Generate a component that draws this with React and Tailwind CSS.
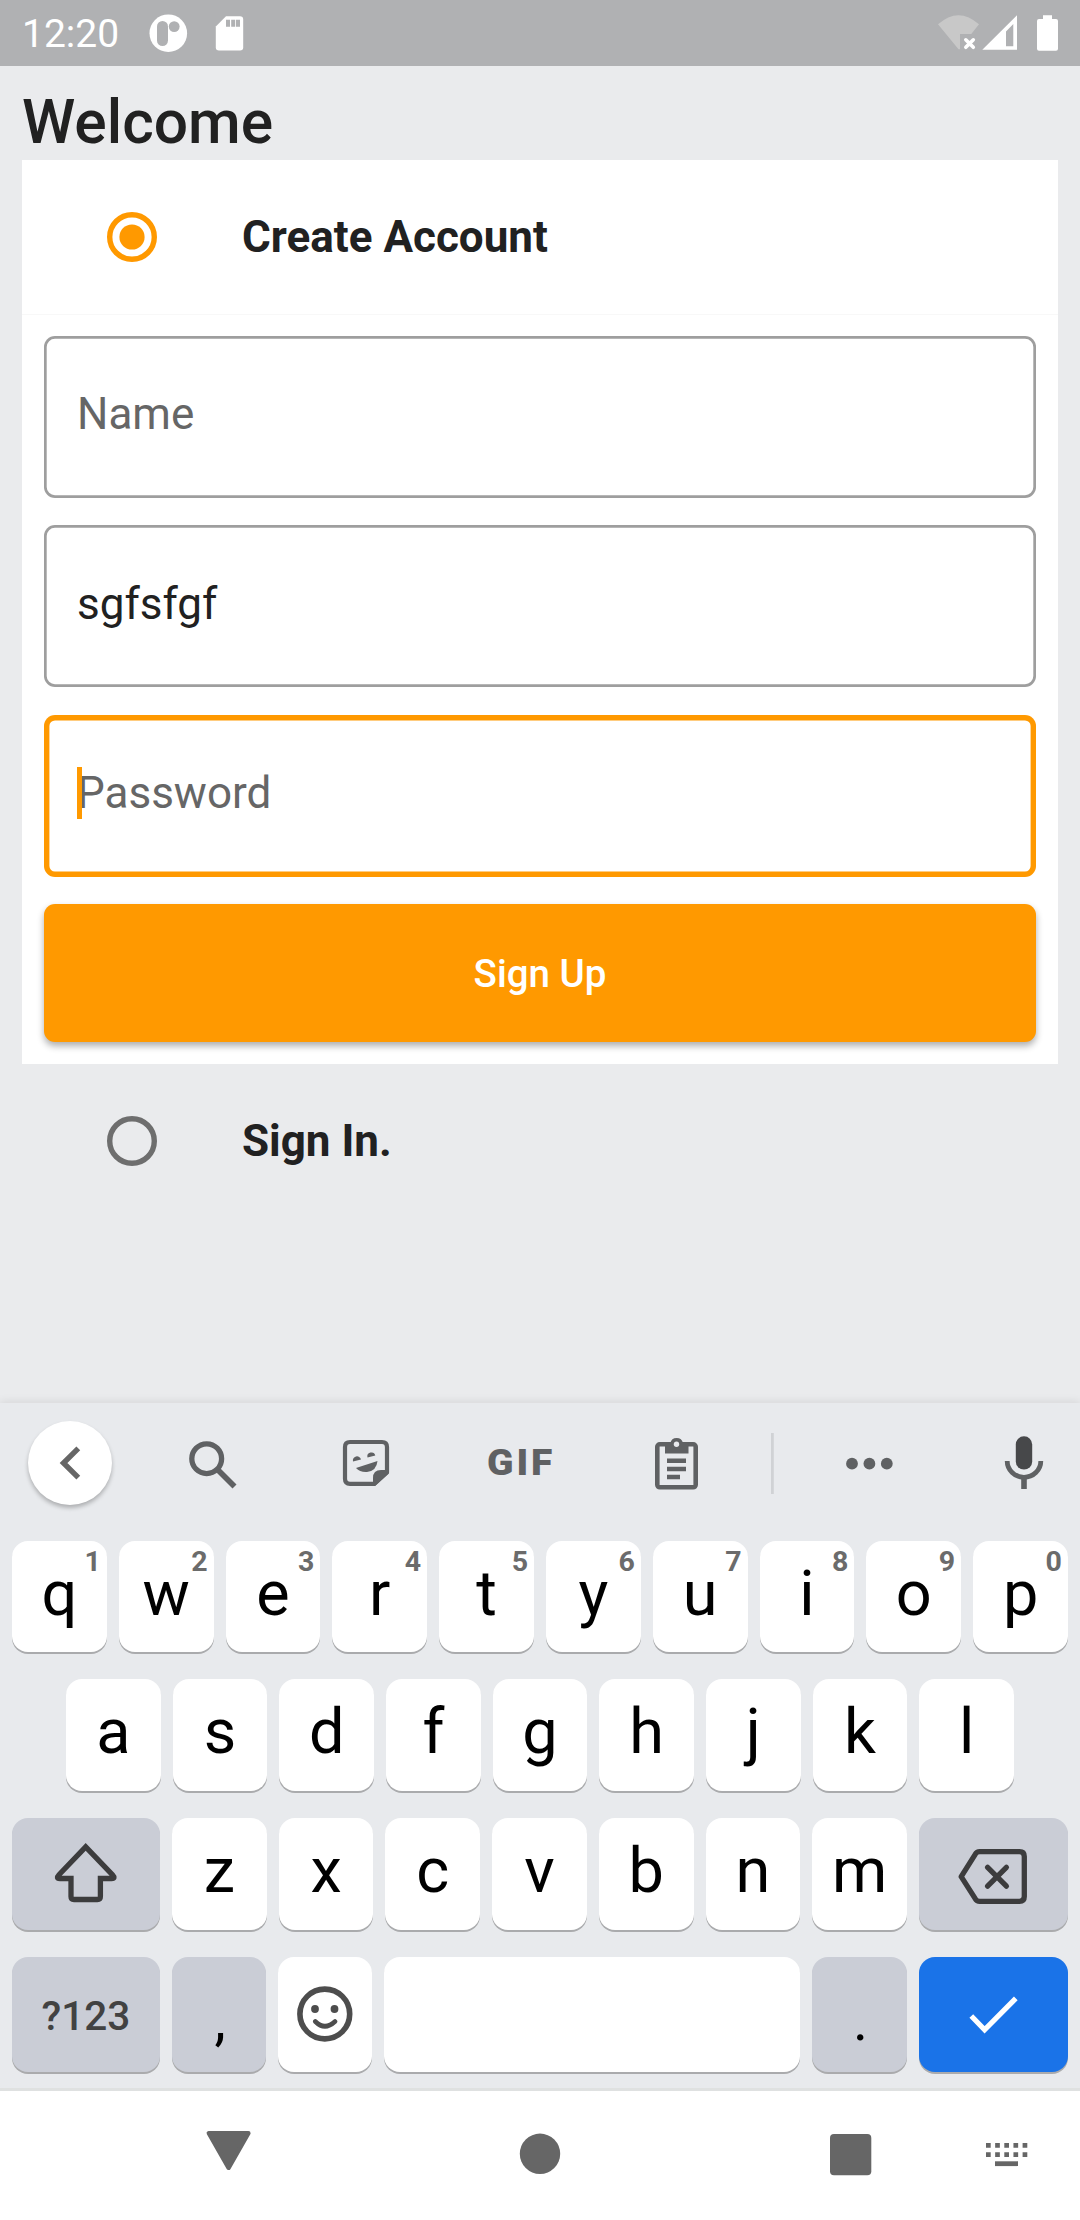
import React from "react";

const INK = "#5f6163";

function Icon({ x, y, w, h, className = "", children }) {
  return (
    <svg width={w} height={h} viewBox={`${x} ${y} ${w} ${h}`} className={`block shrink-0 ${className}`} fill="none">
      {children}
    </svg>
  );
}

function StatusBar() {
  return (
    <header className="flex h-[66px] shrink-0 items-start bg-[#b0b1b3] text-white">
      <span className="ml-[22px] w-[124px] text-[39px] leading-[69px]">12:20</span>
      <Icon x={146} y={0} w={60} h={66}>
        <circle cx="168.3" cy="33.2" r="18.8" fill="#fff" />
        <rect x="157" y="21" width="11" height="25" rx="5.5" fill="#b0b1b3" />
        <circle cx="174.2" cy="26.6" r="5.4" fill="#b0b1b3" />
      </Icon>
      <Icon x={206} y={0} w={50} h={66}>
        <path d="M226 16.3H240Q243.2 16.3 243.2 19.5V47.3Q243.2 50.6 240 50.6H219Q215.8 50.6 215.8 47.3V26.5Z" fill="#fff" />
        <path d="M226 19.7h4v7h-4zM231.2 19.7h4v7h-4zM236 19.7h4v7h-4z" fill="#b0b1b3" />
      </Icon>
      <Icon x={930} y={0} w={51} h={66} className="ml-auto">
        <path d="M938 24.3Q958.5 6 979 24.3L971.3 34H960V49.3H958.5Z" fill="#c8c8c8" />
        <path d="M965.8 39.8L973.3 47.3M973.3 39.8L965.8 47.3" stroke="#fff" strokeWidth="3.6" strokeLinecap="round" />
      </Icon>
      <Icon x={981} y={0} w={44} h={66}>
        <path fillRule="evenodd" d="M1017 15.3V49.8H982.3ZM1013.3 24L1006 31.5V46.3H1013.3Z" fill="#fff" />
      </Icon>
      <Icon x={1025} y={0} w={55} h={66}>
        <path d="M1043 15.2H1052V19H1056Q1058 19 1058 21V48.7Q1058 50.7 1056 50.7H1039Q1037 50.7 1037 48.7V21Q1037 19 1039 19H1043Z" fill="#fff" />
      </Icon>
    </header>
  );
}

function RadioRow({ label, checked }) {
  return (
    <div className="flex h-[154px] items-center pl-[84px]">
      <svg width="52" height="52" viewBox="-26 -26 52 52" fill="none" className="block">
        <circle r="22.3" stroke={checked ? "#ff9900" : "#6e6e6e"} strokeWidth="5.4" />
        {checked && <circle r="12.6" fill="#ff9900" />}
      </svg>
      <span className="ml-[84px] text-[44px] leading-[52px] font-bold text-[#212121]">{label}</span>
    </div>
  );
}

function Field({ text, filled, focused, className = "" }) {
  return (
    <div
      className={`flex h-[162px] items-center rounded-[11px] pl-[33px] ${
        focused ? "shadow-[inset_0_0_0_5.4px_#ff9900]" : "shadow-[inset_0_0_0_2.7px_#9e9e9e]"
      } ${filled ? "pb-[5px]" : "pb-[7px]"} ${className}`}
    >
      <div className="relative">
        <span className={`block text-[44px] leading-[52px] ${filled ? "text-[#212121]" : "text-[#666666]"}`}>{text}</span>
        {focused && <span className="absolute top-0 left-0 h-[52px] w-[5.4px] bg-[#ff9900]" />}
      </div>
    </div>
  );
}

function Form() {
  return (
    <main className="h-[1337px] shrink-0 px-[22px]">
      <h1 className="h-[94px] pt-[18px] text-[60.5px] leading-[77px] font-medium text-[#212121]">Welcome</h1>
      <section className="h-[904px] bg-white">
        <RadioRow label="Create Account" checked />
        <div className="border-t border-[#f8f8f8] px-[22px] pt-[21px]">
          <Field text="Name" />
          <Field text="sgfsfgf" filled className="mt-[27px]" />
          <Field text="Password" focused className="mt-[28px]" />
          <button className="mt-[27px] block h-[138px] w-full rounded-[11px] bg-[#ff9900] text-center text-[38.5px] leading-[140px] font-medium text-white shadow-[0_4px_7px_rgba(0,0,0,0.32)]">
            Sign Up
          </button>
        </div>
      </section>
      <RadioRow label="Sign In." />
    </main>
  );
}

function Toolbar() {
  return (
    <div className="flex h-[138px] items-start pt-[15px]">
      <div className="ml-[28px] flex h-[89px] w-[84px] items-center">
        <div className="h-[84px] w-[84px] rounded-full bg-white pt-[14px] shadow-[0_3px_4px_rgba(0,0,0,0.25)]">
          <Icon x={28} y={1435} w={84} h={55}>
            <path d="M78.3 1448.3L63.5 1463L78.3 1477.7" stroke="#666" strokeWidth="5.4" />
          </Icon>
        </div>
      </div>
      <Icon x={112} y={1418} w={148} h={90}>
        <circle cx="206.7" cy="1458.7" r="14.9" stroke={INK} strokeWidth="5.3" />
        <path d="M218.5 1470.5L234.5 1486.5" stroke={INK} strokeWidth="5.6" />
      </Icon>
      <Icon x={260} y={1418} w={220} h={90}>
        <path d="M350 1442H382Q387 1442 387 1447V1472.5L374.5 1483.8H350Q345 1483.8 345 1478.8V1447Q345 1442 350 1442Z" stroke={INK} strokeWidth="4.2" strokeLinejoin="round" />
        <path d="M389 1470V1473L375 1486H373V1478Q373 1470 381 1470Z" fill={INK} />
        <path d="M356 1468L377.5 1461Q376.5 1471 367 1472Q360 1472.500 356 1468Z" fill={INK} />
        <path d="M353 1461.500A4 4 0 1 1 361 1459.500ZM367.500 1457.500A4 4 0 1 1 375.300 1455.500Z" fill={INK} />
      </Icon>
      <div className="flex h-[90px] w-[90px] items-center pl-[7px]">
        <span className="block origin-left scale-x-[1.05] text-[37px] leading-[44px] font-black tracking-[2.8px] text-[#5f6163]">GIF</span>
      </div>
      <Icon x={570} y={1418} w={240} h={90}>
        <rect x="657.3" y="1444.300" width="38.400" height="43" rx="2.500" stroke={INK} strokeWidth="4.600" />
        <path d="M665 1443H670.300A6.500 6.500 0 0 1 683 1443H688.500V1453.500H665Z" fill={INK} />
        <circle cx="676.500" cy="1444.200" r="2.700" fill="#e8eaed" />
        <path d="M667 1460.800H686M667 1469H686M667 1477H680" stroke={INK} strokeWidth="4.600" />
        <path d="M772.400 1433V1494" stroke="#d0d2d5" strokeWidth="2.800" />
      </Icon>
      <Icon x={810} y={1418} w={120} h={90}>
        <circle cx="852" cy="1463.700" r="5.900" fill={INK} />
        <circle cx="869.400" cy="1463.700" r="5.900" fill={INK} />
        <circle cx="886.800" cy="1463.700" r="5.900" fill={INK} />
      </Icon>
      <Icon x={930} y={1418} w={150} h={90}>
        <rect x="1015.800" y="1436.300" width="16.400" height="33.300" rx="8.200" fill="#47484a" />
        <path d="M1007.200 1461A16.800 16.300 0 0 0 1040.800 1461" stroke={INK} strokeWidth="4.800" />
        <path d="M1024 1477V1489" stroke={INK} strokeWidth="5.600" />
      </Icon>
    </div>
  );
}

function Key({ label, hint, className = "flex-1", tone = "bg-white", children }) {
  return (
    <div className={`relative rounded-[16px] text-center text-black shadow-[0_2px_0_#aaabad] ${tone} ${className}`}>
      {label && <span className="block text-[63px] leading-[105px]">{label}</span>}
      {hint && <span className="absolute top-[5px] right-[6px] text-[28.5px] leading-[32px] font-bold text-[#6b6b6b]">{hint}</span>}
      {children}
    </div>
  );
}

const GRAY = "bg-[#cacdd6]";

function Keyboard() {
  return (
    <section className="h-[688px] shrink-0 border-b-[3px] border-[#dfe1e1] bg-[#e8eaed] shadow-[0_-2px_8px_rgba(0,0,0,0.08)]">
      <Toolbar />
      <div className="flex h-[111px] gap-3 px-3">
        {"qwertyuiop".split("").map((c, i) => (
          <Key key={c} label={c} hint={String((i + 1) % 10)} />
        ))}
      </div>
      <div className="mt-[27px] flex h-[112px] gap-3 px-[66px]">
        {"asdfghjkl".split("").map((c) => (
          <Key key={c} label={c} />
        ))}
      </div>
      <div className="mt-[27px] flex h-[112px] gap-3 px-3">
        <Key className="w-[148px]" tone={GRAY}>
          <Icon x={12} y={1818} w={148} h={112}>
            <path d="M85.700 1846.800L112.500 1874.800Q116 1878.500 111.500 1878.500H100.400V1896.500Q100.400 1899.500 97.400 1899.500H74Q71 1899.500 71 1896.500V1878.500H59.900Q55.500 1878.500 59 1874.800Z" stroke="#3c3c3d" strokeWidth="5.300" />
          </Icon>
        </Key>
        {"zxcvbnm".split("").map((c) => (
          <Key key={c} label={c} />
        ))}
        <Key className="w-[149px]" tone={GRAY}>
          <Icon x={919} y={1818} w={149} h={112}>
            <path d="M961.200 1876.700L975.200 1854.300Q976.700 1851.700 979.700 1851.700H1019.500Q1024.300 1851.700 1024.300 1856.500V1896.500Q1024.300 1901.300 1019.500 1901.300H979.700Q976.700 1901.300 975.200 1898.700Z" stroke="#3c3c3d" strokeWidth="5.300" strokeLinejoin="round" />
            <path d="M987.600 1867.300L1006.400 1886.100M1006.400 1867.300L987.600 1886.100" stroke="#3c3c3d" strokeWidth="5.300" strokeLinecap="round" />
          </Icon>
        </Key>
      </div>
      <div className="mt-[27px] flex h-[115px] gap-3 px-3">
        <Key className="w-[148px]" tone={GRAY}>
          <span className="block text-[40.5px] leading-[118px] font-medium text-[#424242]">?123</span>
        </Key>
        <Key className="w-[94px]" tone={GRAY}>
          <span className="block pl-[2px] text-[57px] leading-[126px]">,</span>
        </Key>
        <Key className="w-[94px]">
          <Icon x={278} y={1957} w={94} h={115}>
            <circle cx="324.800" cy="2014" r="24.900" stroke="#4d4d4d" strokeWidth="5.600" />
            <circle cx="315" cy="2009" r="3.900" fill="#4d4d4d" />
            <circle cx="334.500" cy="2009" r="3.900" fill="#4d4d4d" />
            <path d="M315.300 2021.500Q324.800 2031 335 2021.500" stroke="#4d4d4d" strokeWidth="4.600" strokeLinecap="round" />
          </Icon>
        </Key>
        <Key />
        <Key className="w-[95px]" tone={GRAY}>
          <span className="block pl-[2px] text-[57px] leading-[127px]">.</span>
        </Key>
        <Key className="w-[149px]" tone="bg-[#1a73e8]">
          <Icon x={919} y={1957} w={149} h={115}>
            <path d="M971.300 2016L984.600 2029.800L1015.800 1998.300" stroke="#fff" strokeWidth="5.200" />
          </Icon>
        </Key>
      </div>
    </section>
  );
}

function NavBar() {
  return (
    <nav className="flex h-[129px] shrink-0 bg-white">
      <Icon x={0} y={2091} w={400} h={129}>
        <path d="M208.800 2133.200H248.400L228.600 2167.800Z" fill="#666" stroke="#666" strokeWidth="4.400" strokeLinejoin="round" />
      </Icon>
      <Icon x={400} y={2091} w={280} h={129}>
        <circle cx="540" cy="2153.800" r="20.200" fill="#666" />
      </Icon>
      <Icon x={680} y={2091} w={270} h={129}>
        <rect x="830" y="2134" width="41.300" height="41.300" rx="4" fill="#666" />
      </Icon>
      <Icon x={950} y={2091} w={130} h={129}>
        <path d="M986 2145.300H1030M986 2154.600H1030" stroke="#666" strokeWidth="4.700" strokeDasharray="4.700 4.450" />
        <path d="M995 2163.700H1018" stroke="#666" strokeWidth="4.800" />
      </Icon>
    </nav>
  );
}

export default function App() {
  return (
    <div className="flex h-[2220px] w-[1080px] flex-col overflow-hidden bg-[#eaebed] font-['Roboto',sans-serif]">
      <StatusBar />
      <Form />
      <Keyboard />
      <NavBar />
    </div>
  );
}
